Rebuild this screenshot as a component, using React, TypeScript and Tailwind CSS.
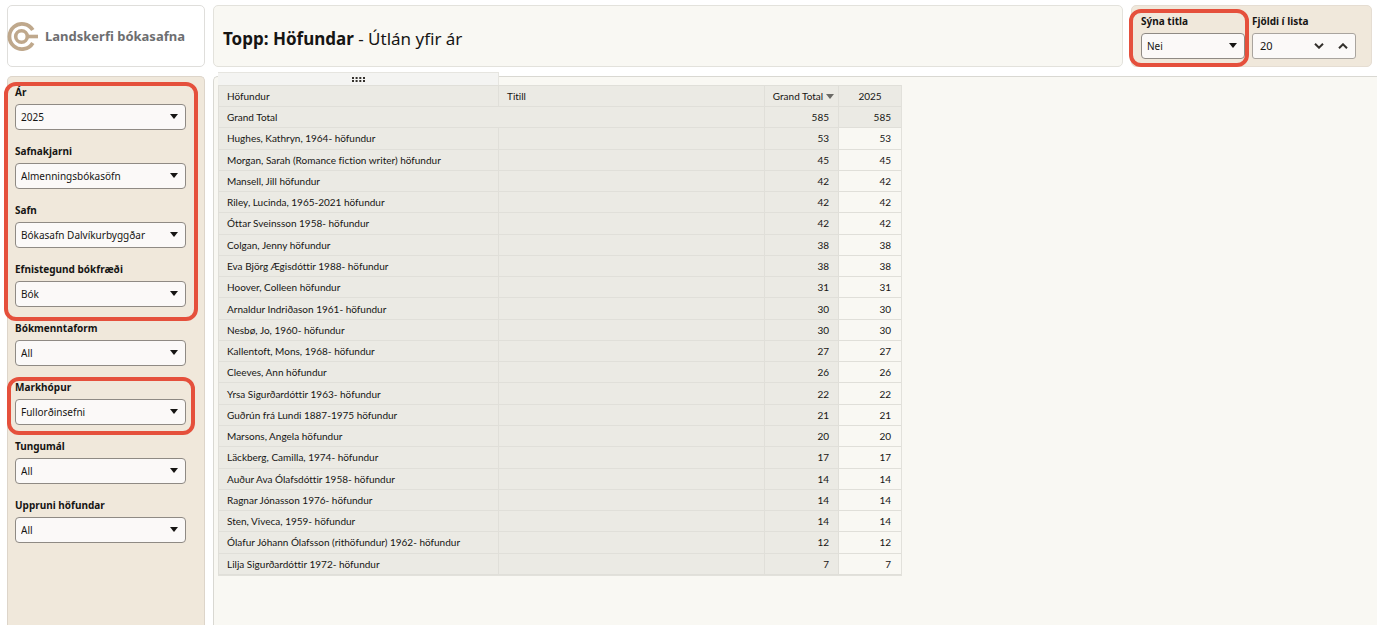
import { useId, useState } from "react";

interface SelectFieldProps {
  label: string;
  value: string;
}

interface AuthorRow {
  name: string;
  total: number;
}

const authors: AuthorRow[] = [
  { name: "Hughes, Kathryn, 1964- höfundur", total: 53 },
  { name: "Morgan, Sarah (Romance fiction writer) höfundur", total: 45 },
  { name: "Mansell, Jill höfundur", total: 42 },
  { name: "Riley, Lucinda, 1965-2021 höfundur", total: 42 },
  { name: "Óttar Sveinsson 1958- höfundur", total: 42 },
  { name: "Colgan, Jenny höfundur", total: 38 },
  { name: "Eva Björg Ægisdóttir 1988- höfundur", total: 38 },
  { name: "Hoover, Colleen höfundur", total: 31 },
  { name: "Arnaldur Indriðason 1961- höfundur", total: 30 },
  { name: "Nesbø, Jo, 1960- höfundur", total: 30 },
  { name: "Kallentoft, Mons, 1968- höfundur", total: 27 },
  { name: "Cleeves, Ann höfundur", total: 26 },
  { name: "Yrsa Sigurðardóttir 1963- höfundur", total: 22 },
  { name: "Guðrún frá Lundi 1887-1975 höfundur", total: 21 },
  { name: "Marsons, Angela höfundur", total: 20 },
  { name: "Läckberg, Camilla, 1974- höfundur", total: 17 },
  { name: "Auður Ava Ólafsdóttir 1958- höfundur", total: 14 },
  { name: "Ragnar Jónasson 1976- höfundur", total: 14 },
  { name: "Sten, Viveca, 1959- höfundur", total: 14 },
  { name: "Ólafur Jóhann Ólafsson (rithöfundur) 1962- höfundur", total: 12 },
  { name: "Lilja Sigurðardóttir 1972- höfundur", total: 7 },
];

function SelectField({ label, value }: SelectFieldProps) {
  const id = useId();
  return (
    <div>
      <label htmlFor={id} className="mb-1 block text-[10px] leading-4 font-bold">
        {label}
      </label>
      <div className="relative">
        <select
          id={id}
          defaultValue={value}
          className="block h-[26px] w-full appearance-none rounded-[4px] border border-[#8f8a84] bg-[#fbf9f8] pr-5 pl-[5px] text-[10px]"
        >
          <option>{value}</option>
        </select>
        <svg viewBox="0 0 8 5" className="pointer-events-none absolute top-[10px] right-2 h-[5px] w-2">
          <path d="M0 0H8L4 5Z" fill="#161513" />
        </svg>
      </div>
    </div>
  );
}

function NumberField({ label, initial }: { label: string; initial: number }) {
  const id = useId();
  const [count, setCount] = useState(initial);
  return (
    <div>
      <label htmlFor={id} className="mb-1 block text-[10px] leading-4 font-bold">
        {label}
      </label>
      <div className="flex h-[26px] items-center rounded-[3px] border border-[#a9a49e] bg-[#fbf9f8]">
        <input
          id={id}
          type="text"
          inputMode="numeric"
          value={count}
          onChange={(e) => setCount(Number(e.target.value) || 0)}
          className="w-full min-w-0 bg-transparent pt-px pl-[7px] text-[11px] outline-none"
        />
        <button
          aria-label="Decrease"
          onClick={() => setCount(count - 1)}
          className="flex w-6 shrink-0 justify-center"
        >
          <svg viewBox="0 0 10 6" className="h-[6px] w-[10px]" fill="none" stroke="#33302c" strokeWidth="2">
            <path d="M1 0.7L5 4.7L9 0.7" />
          </svg>
        </button>
        <button
          aria-label="Increase"
          onClick={() => setCount(count + 1)}
          className="flex w-6 shrink-0 justify-center"
        >
          <svg viewBox="0 0 10 6" className="h-[6px] w-[10px]" fill="none" stroke="#33302c" strokeWidth="2">
            <path d="M1 5.3L5 1.3L9 5.3" />
          </svg>
        </button>
      </div>
    </div>
  );
}

function Logo() {
  return (
    <div className="flex h-full items-center">
      <svg viewBox="0 0 30 30" className="h-[30px] w-[30px] shrink-0 overflow-visible" fill="none" stroke="#bfa88c">
        <path d="M24.8 9A12.6 12.6 0 1 0 24.8 22" strokeWidth="3.8" />
        <circle cx="13.5" cy="15.5" r="5.8" strokeWidth="3.6" />
        <path d="M19 15.5H30" strokeWidth="3.6" />
      </svg>
      <span className="ml-[7px] pt-px text-[13px] font-bold whitespace-nowrap text-[#6d6e70]">Landskerfi bókasafna</span>
    </div>
  );
}

function AuthorTable() {
  return (
    <table className="h-[491px] w-[684px] table-fixed border-separate border-spacing-0 border-r border-b border-[#e2e1db] bg-[#ebeae4] font-[Lato,'Noto_Sans',sans-serif] text-[10px] leading-4 [font-variant-ligatures:none] [&_td]:border-b [&_td]:border-[#e0dfd9] [&_td]:p-0 [&_th]:h-[22px] [&_th]:border-b [&_th]:border-[#e0dfd9] [&_th]:p-0 [&_th]:font-normal">
      <colgroup>
        <col className="w-[281px]" />
        <col className="w-[266px]" />
        <col className="w-[74px]" />
        <col />
      </colgroup>
      <thead>
        <tr>
          <th className="border-t border-r border-l text-left">
            <span className="pl-2">Höfundur</span>
          </th>
          <th className="border-t border-r text-left">
            <span className="pl-2">Titill</span>
          </th>
          <th className="border-t border-r">
            <button className="inline-flex items-center gap-[3px] pl-1 whitespace-nowrap">
              Grand Total
              <svg viewBox="0 0 8 5" className="h-[5px] w-2">
                <path d="M0 0H8L4 5Z" fill="#6b6a66" />
              </svg>
            </button>
          </th>
          <th className="border-t">2025</th>
        </tr>
      </thead>
      <tbody>
        <tr>
          <td colSpan={2} className="border-r border-l">
            <span className="pl-2">Grand Total</span>
          </td>
          <td className="border-r text-right">
            <span className="pr-[9px]">585</span>
          </td>
          <td className="text-right">
            <span className="pr-[10px]">585</span>
          </td>
        </tr>
        {authors.map((author) => (
          <tr key={author.name}>
            <td className="border-r border-l whitespace-nowrap">
              <span className="pl-2">{author.name}</span>
            </td>
            <td className="border-r" />
            <td className="border-r text-right">
              <span className="pr-[9px]">{author.total}</span>
            </td>
            <td className="bg-[#f9f8f3] text-right">
              <span className="pr-[10px]">{author.total}</span>
            </td>
          </tr>
        ))}
      </tbody>
    </table>
  );
}

export default function App() {
  return (
    <div className="flex min-h-screen flex-col gap-[9px] bg-white pt-[5px] pl-[7px] font-['Noto_Sans',sans-serif] text-[#161513]">
      <header className="flex h-[62px] gap-2 pr-[5px]">
        <div className="w-[198px] shrink-0 rounded-[5px] border border-[#dfdedb]">
          <Logo />
        </div>
        <div className="flex flex-1 items-center rounded-[5px] border border-[#e3e2dc] bg-[#f9f8f3] px-[9px]">
          <h1 className="pt-[6px] text-[17px]">
            <strong>Topp: Höfundar</strong> - Útlán yfir ár
          </h1>
        </div>
        <div className="flex w-[241px] shrink-0 items-start gap-[7px] rounded-[5px] border border-[#e5ddd2] bg-[#f0e8db] pt-[7px] pl-[9px]">
          <div className="relative w-[104px]">
            <SelectField label="Sýna titla" value="Nei" />
            <div className="pointer-events-none absolute -top-1 -right-1 -bottom-2 -left-3 rounded-[12px] border-4 border-[#e5503c]" />
          </div>
          <div className="w-[104px]">
            <NumberField label="Fjöldi í lista" initial={20} />
          </div>
        </div>
      </header>

      <div className="flex flex-1 gap-2">
        <aside className="flex w-[198px] shrink-0 flex-col gap-[13px] rounded-t-[5px] border border-b-0 border-[#ddd5ca] bg-[#f0e8db] pt-[7px] pr-[18px] pl-[7px]">
          <div className="relative flex flex-col gap-[13px]">
            <SelectField label="Ár" value="2025" />
            <SelectField label="Safnakjarni" value="Almenningsbókasöfn" />
            <SelectField label="Safn" value="Bókasafn Dalvíkurbyggðar" />
            <SelectField label="Efnistegund bókfræði" value="Bók" />
            <div className="pointer-events-none absolute -top-[2px] -right-3 -bottom-[14px] -left-[11px] rounded-[12px] border-4 border-[#e5503c]" />
          </div>
          <SelectField label="Bókmenntaform" value="All" />
          <div className="relative">
            <SelectField label="Markhópur" value="Fullorðinsefni" />
            <div className="pointer-events-none absolute -top-[2px] -right-[9px] -bottom-[10px] -left-2 rounded-[12px] border-4 border-[#e5503c]" />
          </div>
          <SelectField label="Tungumál" value="All" />
          <SelectField label="Uppruni höfundar" value="All" />
        </aside>

        <main className="flex-1 rounded-tl-[5px] border-t border-l border-[#d9d8d2] bg-[#f9f8f3] pt-2 pl-1">
          <div className="relative">
            <AuthorTable />
            <div className="absolute -top-[13px] left-0 flex h-[13px] w-[281px] items-center justify-center border-t border-r border-[#e6e5e0] bg-[#f4f4f2]">
              <svg viewBox="0 0 13 5" className="h-[5px] w-[13px]" fill="#33302c">
                <path d="M0 0h2v2h-2zM3.6 0h2v2h-2zM7.3 0h2v2h-2zM11 0h2v2h-2zM0 3h2v2h-2zM3.6 3h2v2h-2zM7.3 3h2v2h-2zM11 3h2v2h-2z" />
              </svg>
            </div>
          </div>
        </main>
      </div>
    </div>
  );
}
